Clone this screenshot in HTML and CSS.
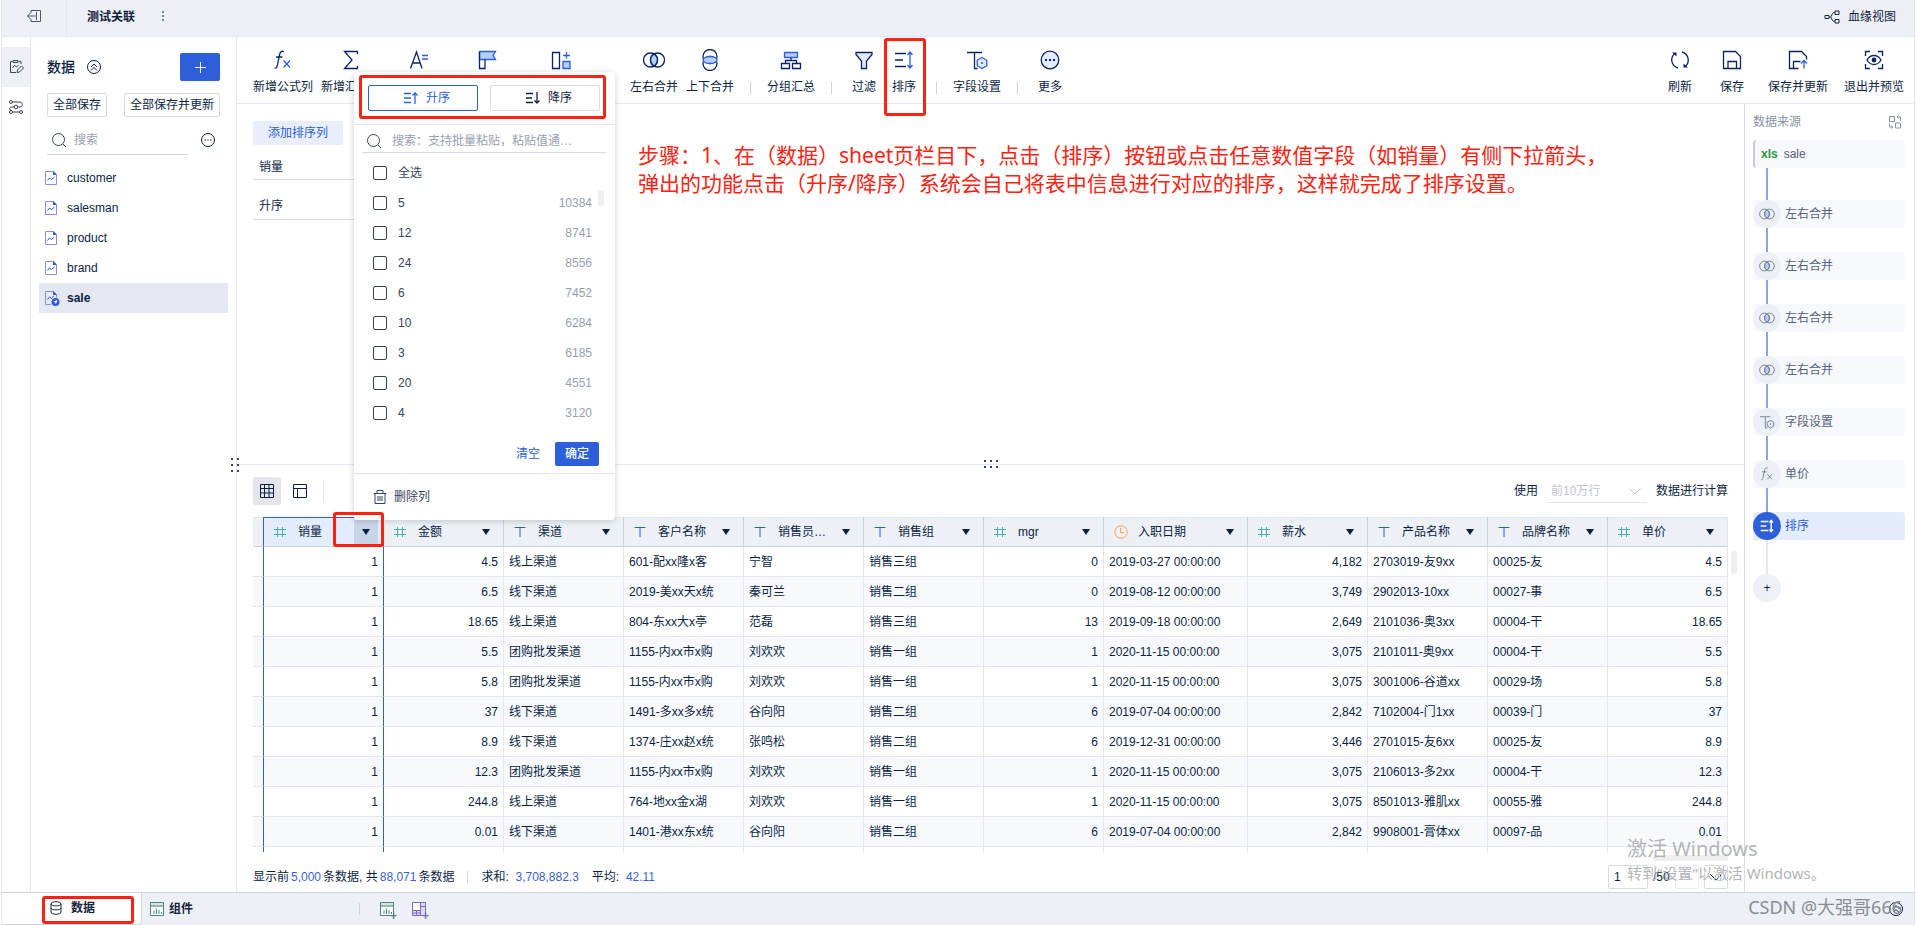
FILE: index.html
```html
<!DOCTYPE html>
<html lang="zh-CN">
<head>
<meta charset="utf-8">
<title>测试关联</title>
<link rel="stylesheet" href="styles.css">
</head>
<body>
<svg class="sprite" aria-hidden="true">
  <symbol id="exit" viewBox="0 0 16 16"><path d="M5 5V2.500h9.500v11H5V11M10.500 4v8M1.500 8h8M4.500 5l-3 3 3 3"/></symbol>
  <symbol id="edit" viewBox="0 0 16 16"><path d="M8 13.500H2.500v-11h2M11 2.500h2V5M5 1.500h5v2H5zM4.500 9l2-2.500 2 1.500 2-2M9 13.500l.5-2.500 4-4 2 2-4 4z"/></symbol>
  <symbol id="flow" viewBox="0 0 16 16"><circle cx="3" cy="3" r="1.500"/><circle cx="8" cy="8" r="1.800"/><circle cx="13" cy="13" r="1.500"/><circle cx="3" cy="13" r="1.500"/><path d="M4.500 3H12c3 0 3 5 0 5h-2M6 8H4C1 8 1 11 3 11.500M4.500 13h7"/></symbol>
  <symbol id="up2" viewBox="0 0 16 16"><circle cx="8" cy="8" r="6.500"/><path d="M5 8l3-3 3 3M5 11.500l3-3 3 3"/></symbol>
  <symbol id="up1" viewBox="0 0 16 16"><circle cx="8" cy="8" r="6.500"/><path d="M4.500 8L8 4.500 11.500 8M5.500 11L8 8.500l2.500 2.500"/></symbol>
  <symbol id="search" viewBox="0 0 16 16"><circle cx="7.500" cy="7.500" r="6"/><path d="M12 12l3 3"/></symbol>
  <symbol id="dots" viewBox="0 0 16 16"><circle cx="8" cy="8" r="6.500"/><path d="M4.500 8h1.400M7.300 8h1.400M10.100 8h1.400"/></symbol>
  <symbol id="file" viewBox="0 0 14 16"><path stroke="#8d8be0" d="M1.500 1.500h8l3 3v10h-11z"/><path fill="#2d5fdb" stroke="none" d="M9 1l4 4H9z"/><path stroke="#2d5fdb" d="M3.500 10.500l2-2.500 2 1.500L10.500 7"/></symbol>
  <symbol id="filesel" viewBox="0 0 16 16"><path stroke="#8d8be0" d="M7 14.500H1.500v-13h8l3 3v3"/><path fill="#2d5fdb" stroke="none" d="M9 1l4 4H9z"/><path stroke="#2d5fdb" d="M3.500 9.500l2-2.500 2 1.500L9.500 6"/><circle cx="11.500" cy="12" r="4" fill="#2d5fdb" stroke="none"/><path d="M9.500 11.500l4-1.500-1.500 4-1-1.500z" fill="#fff" stroke="none"/></symbol>
  <symbol id="fx" viewBox="0 0 20 20"><path d="M11 1.500C8 .5 7 2.500 6.500 5L4.500 14.500C4 17.500 3 18.500 1.500 18M3 7h6.500"/><path class="b" d="M10.500 10.500l6.500 7M17 10.500l-6.500 7"/></symbol>
  <symbol id="sum" viewBox="0 0 20 20"><path d="M16.500 4V1.500h-13L11 10l-7.500 8.500h13V16"/></symbol>
  <symbol id="aeq" viewBox="0 0 20 20"><path d="M1.500 18.500L7.500 2 13 18.500M3.500 13h7.500"/><path class="b" d="M13 5.500h6M13 9h6"/></symbol>
  <symbol id="flag" viewBox="0 0 20 20"><path class="f b" d="M2.500 1.500h16l-2.500 4 2.500 4h-16z"/><path d="M2.500 2v16.500H8v-9"/></symbol>
  <symbol id="addcol" viewBox="0 0 20 20"><path d="M1.500 2.500h7v16h-7z"/><path class="f b" d="M12 11.500h7v7h-7z"/><path class="b" d="M15.500 2v6.500M12 5.500h7"/></symbol>
  <symbol id="join" viewBox="0 0 22 20"><path class="f b" d="M11 3.900a7 7 0 0 1 0 12.200 7 7 0 0 1 0-12.200z"/><circle cx="7.500" cy="10" r="7"/><circle cx="14.500" cy="10" r="7"/></symbol>
  <symbol id="union" viewBox="0 0 20 22"><circle cx="10" cy="7.500" r="7"/><circle cx="10" cy="14.500" r="7"/><ellipse class="f b" cx="10" cy="11" rx="7" ry="3.500"/></symbol>
  <symbol id="group" viewBox="0 0 22 20"><path class="f b" d="M4.500 2.500h13v5h-13z"/><path d="M11 8v2.500M5.500 13.500v-3h11v3M1.500 13.500h8v5h-8zM12.500 13.500h8v5h-8z"/></symbol>
  <symbol id="filter" viewBox="0 0 20 20"><path class="lf" d="M2 2.500h16v2L12.500 11v7.500h-5V11L2 4.500z"/></symbol>
  <symbol id="sort" viewBox="0 0 20 20"><path d="M1 3.500h11M1 10h8M1 16.500h11"/><path class="b" d="M16 2v16M13.500 5L16 2l2.500 3M13.500 15l2.500 3 2.500-3"/></symbol>
  <symbol id="field" viewBox="0 0 22 20"><path d="M1 2.500h15M8.500 2.500v16h3"/><path class="lf b" d="M16 7.500l4.800 2.800v5.400L16 18.500l-4.800-2.800v-5.400z"/><path class="b" d="M15.200 13h1.600" stroke-width="2"/></symbol>
  <symbol id="more" viewBox="0 0 20 20"><circle class="lf" cx="10" cy="10" r="8.800"/><path d="M5 10h2M9 10h2M13 10h2" stroke-width="2"/></symbol>
  <symbol id="refresh" viewBox="0 0 20 20"><path d="M8 18A8.300 8.300 0 0 1 4.500 3.800M12 2a8.300 8.300 0 0 1 3.500 14.200"/><path fill="currentColor" d="M2 2.500h4.500v4zM18 17.500h-4.500v-4z" stroke="none"/></symbol>
  <symbol id="save" viewBox="0 0 20 20"><path d="M1.500 1.500h12l5 5v12h-17zM6 18v-6.500h8.500V18"/></symbol>
  <symbol id="saveup" viewBox="0 0 20 20"><path d="M10.500 18.500h-9v-17h12l5 5v3M5.500 18v-6.500h7"/><path class="b" d="M16 18.500v-8M13 13.500l3-3 3 3"/></symbol>
  <symbol id="preview" viewBox="0 0 20 20"><path d="M1.500 6V1.500H6M14 1.500h4.500V6M18.500 14v4.500H14M6 18.500H1.500V14"/><path d="M3 10c3.500-6 10.500-6 14 0-3.500 6-10.500 6-14 0z"/><circle cx="10" cy="10" r="1.800" fill="currentColor"/></symbol>
  <symbol id="lineage" viewBox="0 0 16 16"><path d="M1 6.500h4v3H1zM11 2h4v3.500h-4zM11 10.500h4V14h-4zM5 8h1.500C8 8 7.500 3.700 9.500 3.700H11M6.500 8c1.500 0 1 4.200 3 4.200H11"/></symbol>
  <symbol id="asc" viewBox="0 0 14 12"><path d="M0 1.500h7M0 6h7M0 10.500h7"/><path d="M11 12V1M8.500 3.500L11 1l2.500 2.500"/></symbol>
  <symbol id="desc" viewBox="0 0 14 12"><path d="M0 1.500h7M0 6h6M0 10.500h7"/><path d="M11 0v11M8.500 8.500L11 11l2.500-2.500"/></symbol>
  <symbol id="trash" viewBox="0 0 14 14"><path d="M.5 3.500h13M4 3V.5h6V3M2 3.500v10h10v-10M5 6v5M7 6v5M9 6v5"/></symbol>
  <symbol id="grid" viewBox="0 0 16 16"><path d="M1.500 1.500h13v13h-13zM1.500 5.500h13M1.500 10h13M5.500 1.500v13M10 1.500v13"/></symbol>
  <symbol id="layout" viewBox="0 0 16 16"><path d="M1.500 1.500h13v13h-13zM1.500 5.500h13M5.500 5.500v9"/></symbol>
  <symbol id="num" viewBox="0 0 12 12"><path d="M3.500 1v10M8.500 1v10M0 3.500h12M0 8.500h12"/></symbol>
  <symbol id="txt" viewBox="0 0 12 12"><path d="M.5 1.500h11M6 1.500V11"/></symbol>
  <symbol id="time" viewBox="0 0 14 14"><circle cx="7" cy="7" r="6.200"/><path d="M6.500 3v4.500H10"/></symbol>
  <symbol id="chev" viewBox="0 0 12 12"><path d="M.5 3.500L6 9l5.500-5.500"/></symbol>
  <symbol id="swap" viewBox="0 0 14 14"><path d="M1.500 1.500h5v5h-5zM7.500 8h5v5h-5zM9 2h3.500v4M10.500 .5L9 2l1.500 1.500M5 12H1.500V8.500M3.500 10.500L5 12l-1.500 1.500"/></symbol>
  <symbol id="db" viewBox="0 0 12 14"><path d="M1 3c0-3 10-3 10 0v8c0 3-10 3-10 0zM1 3c0 2.500 10 2.500 10 0M1 7c0 2.500 10 2.500 10 0"/></symbol>
  <symbol id="chart" viewBox="0 0 14 14"><path fill="#d3e4e2" d="M.5.5h13v13H.5z"/><path fill="#fff" stroke="none" d="M1 4.500h12V13H1z"/><path d="M.5 4h13M4 12V8.500M6.500 12V6.500M9 12V8M11.500 12v-2"/></symbol>
  <symbol id="dash" viewBox="0 0 14 14"><path fill="#ded7f5" d="M.5.5h13v13H.5z"/><path fill="#fff" d="M.5.5h8v8h-8z"/><path d="M8.500 4.500h5M4.500 8.500v5M8.500 8.500v5M.5 11h8"/></symbol>
</svg>

<div class="app">
  <header class="topbar">
    <button class="back" aria-label="返回"><svg class="i16"><use href="#exit"/></svg></button>
    <h1>测试关联</h1>
    <button class="kebab" aria-label="菜单"><i></i><i></i><i></i></button>
    <button class="lineage"><svg class="i16"><use href="#lineage"/></svg>血缘视图</button>
  </header>

  <div class="body">
    <nav class="rail">
      <button class="on" aria-label="编辑"><svg class="i16"><use href="#edit"/></svg></button>
      <button aria-label="流程"><svg class="i16"><use href="#flow"/></svg></button>
    </nav>

    <aside class="side">
      <div class="side-head"><h2>数据</h2><svg class="i16"><use href="#up2"/></svg><button class="add" aria-label="添加"></button></div>
      <div class="side-btns"><button class="outline">全部保存</button><button class="outline">全部保存并更新</button></div>
      <div class="side-search">
        <label class="search"><svg class="i16"><use href="#search"/></svg><input type="text" placeholder="搜索" aria-label="搜索"></label>
        <button aria-label="更多选项"><svg class="i16"><use href="#dots"/></svg></button>
      </div>
      <ul class="files">
        <li><svg><use href="#file"/></svg>customer</li>
        <li><svg><use href="#file"/></svg>salesman</li>
        <li><svg><use href="#file"/></svg>product</li>
        <li><svg><use href="#file"/></svg>brand</li>
        <li class="on"><svg class="sel"><use href="#filesel"/></svg>sale</li>
      </ul>
      <span class="grip grip-v"></span>
    </aside>

    <main class="work">
      <div class="tools">
        <button class="tool w5"><svg><use href="#fx"/></svg><span>新增公式列</span></button>
        <button class="tool w5"><svg><use href="#sum"/></svg><span>新增汇总列</span></button>
        <button class="tool w5" aria-label="文本"><svg><use href="#aeq"/></svg><span></span></button>
        <button class="tool w5" aria-label="标记"><svg><use href="#flag"/></svg><span></span></button>
        <button class="tool w6" aria-label="添加列"><svg><use href="#addcol"/></svg><span></span></button>
        <i class="sep"></i>
        <button class="tool"><svg class="wide"><use href="#join"/></svg><span>左右合并</span></button>
        <button class="tool"><svg class="tall"><use href="#union"/></svg><span>上下合并</span></button>
        <i class="sep"></i>
        <button class="tool"><svg class="wide"><use href="#group"/></svg><span>分组汇总</span></button>
        <i class="sep"></i>
        <button class="tool"><svg><use href="#filter"/></svg><span>过滤</span></button>
        <button class="tool marked"><svg><use href="#sort"/></svg><span>排序</span></button>
        <i class="sep"></i>
        <button class="tool"><svg class="wide"><use href="#field"/></svg><span>字段设置</span></button>
        <i class="sep"></i>
        <button class="tool"><svg><use href="#more"/></svg><span>更多</span></button>
        <div class="tools-right">
          <button class="tool"><svg><use href="#refresh"/></svg><span>刷新</span></button>
          <button class="tool"><svg><use href="#save"/></svg><span>保存</span></button>
          <button class="tool"><svg><use href="#saveup"/></svg><span>保存并更新</span></button>
          <button class="tool"><svg><use href="#preview"/></svg><span>退出并预览</span></button>
        </div>
      </div>

      <div class="panes">
        <div class="center">
          <section class="config">
            <button class="soft">添加排序列</button>
            <div class="line">销量</div>
            <div class="line">升序</div>
            <p class="note">步骤：1、在（数据）sheet页栏目下，点击（排序）按钮或点击任意数值字段（如销量）有侧下拉箭头，<br>弹出的功能点击（升序/降序）系统会自己将表中信息进行对应的排序，这样就完成了排序设置。</p>
          </section>
          <section class="data">
            <span class="grip grip-h"></span>
            <div class="view-bar">
              <button class="view on" aria-label="表格"><svg class="i16"><use href="#grid"/></svg></button>
              <button class="view" aria-label="布局"><svg class="i16"><use href="#layout"/></svg></button>
              <i></i>
              <div class="limit"><label for="limit">使用</label><span class="pick"><select id="limit" disabled><option>前10万行</option></select><svg><use href="#chev"/></svg></span><span>数据进行计算</span></div>
            </div>
            <div class="grid-wrap">
              <table>
                <colgroup><col class="c-stub"><col><col><col><col><col><col><col><col class="c-date"><col><col><col><col></colgroup>
                <thead><tr>
                  <th></th>
                  <th class="cur"><div><svg class="g"><use href="#num"/></svg><span>销量</span><button aria-label="销量菜单"></button></div></th>
                  <th><div><svg class="g"><use href="#num"/></svg><span>金额</span><button aria-label="金额菜单"></button></div></th>
                  <th><div><svg><use href="#txt"/></svg><span>渠道</span><button aria-label="渠道菜单"></button></div></th>
                  <th><div><svg><use href="#txt"/></svg><span>客户名称</span><button aria-label="客户名称菜单"></button></div></th>
                  <th><div><svg><use href="#txt"/></svg><span>销售员…</span><button aria-label="销售员菜单"></button></div></th>
                  <th><div><svg><use href="#txt"/></svg><span>销售组</span><button aria-label="销售组菜单"></button></div></th>
                  <th><div><svg class="g"><use href="#num"/></svg><span>mgr</span><button aria-label="mgr菜单"></button></div></th>
                  <th><div><svg class="o"><use href="#time"/></svg><span>入职日期</span><button aria-label="入职日期菜单"></button></div></th>
                  <th><div><svg class="g"><use href="#num"/></svg><span>薪水</span><button aria-label="薪水菜单"></button></div></th>
                  <th><div><svg><use href="#txt"/></svg><span>产品名称</span><button aria-label="产品名称菜单"></button></div></th>
                  <th><div><svg><use href="#txt"/></svg><span>品牌名称</span><button aria-label="品牌名称菜单"></button></div></th>
                  <th><div><svg class="g"><use href="#num"/></svg><span>单价</span><button aria-label="单价菜单"></button></div></th>
                </tr></thead>
                <tbody>
                  <tr><td></td><td class="n">1</td><td class="n">4.5</td><td>线上渠道</td><td>601-配xx隆x客</td><td>宁智</td><td>销售三组</td><td class="n">0</td><td>2019-03-27 00:00:00</td><td class="n">4,182</td><td>2703019-友9xx</td><td>00025-友</td><td class="n">4.5</td></tr>
                  <tr><td></td><td class="n">1</td><td class="n">6.5</td><td>线下渠道</td><td>2019-美xx天x统</td><td>秦可兰</td><td>销售二组</td><td class="n">0</td><td>2019-08-12 00:00:00</td><td class="n">3,749</td><td>2902013-10xx</td><td>00027-事</td><td class="n">6.5</td></tr>
                  <tr><td></td><td class="n">1</td><td class="n">18.65</td><td>线上渠道</td><td>804-东xx大x亭</td><td>范磊</td><td>销售三组</td><td class="n">13</td><td>2019-09-18 00:00:00</td><td class="n">2,649</td><td>2101036-奥3xx</td><td>00004-干</td><td class="n">18.65</td></tr>
                  <tr><td></td><td class="n">1</td><td class="n">5.5</td><td>团购批发渠道</td><td>1155-内xx市x购</td><td>刘欢欢</td><td>销售一组</td><td class="n">1</td><td>2020-11-15 00:00:00</td><td class="n">3,075</td><td>2101011-奥9xx</td><td>00004-干</td><td class="n">5.5</td></tr>
                  <tr><td></td><td class="n">1</td><td class="n">5.8</td><td>团购批发渠道</td><td>1155-内xx市x购</td><td>刘欢欢</td><td>销售一组</td><td class="n">1</td><td>2020-11-15 00:00:00</td><td class="n">3,075</td><td>3001006-谷道xx</td><td>00029-场</td><td class="n">5.8</td></tr>
                  <tr><td></td><td class="n">1</td><td class="n">37</td><td>线下渠道</td><td>1491-多xx多x统</td><td>谷向阳</td><td>销售二组</td><td class="n">6</td><td>2019-07-04 00:00:00</td><td class="n">2,842</td><td>7102004-门1xx</td><td>00039-门</td><td class="n">37</td></tr>
                  <tr><td></td><td class="n">1</td><td class="n">8.9</td><td>线下渠道</td><td>1374-庄xx赵x统</td><td>张鸣松</td><td>销售二组</td><td class="n">6</td><td>2019-12-31 00:00:00</td><td class="n">3,446</td><td>2701015-友6xx</td><td>00025-友</td><td class="n">8.9</td></tr>
                  <tr><td></td><td class="n">1</td><td class="n">12.3</td><td>团购批发渠道</td><td>1155-内xx市x购</td><td>刘欢欢</td><td>销售一组</td><td class="n">1</td><td>2020-11-15 00:00:00</td><td class="n">3,075</td><td>2106013-多2xx</td><td>00004-干</td><td class="n">12.3</td></tr>
                  <tr><td></td><td class="n">1</td><td class="n">244.8</td><td>线上渠道</td><td>764-地xx金x湖</td><td>刘欢欢</td><td>销售一组</td><td class="n">1</td><td>2020-11-15 00:00:00</td><td class="n">3,075</td><td>8501013-雅肌xx</td><td>00055-雅</td><td class="n">244.8</td></tr>
                  <tr><td></td><td class="n">1</td><td class="n">0.01</td><td>线下渠道</td><td>1401-港xx东x统</td><td>谷向阳</td><td>销售二组</td><td class="n">6</td><td>2019-07-04 00:00:00</td><td class="n">2,842</td><td>9908001-膏体xx</td><td>00097-品</td><td class="n">0.01</td></tr>
                  <tr class="cut"><td></td><td></td><td></td><td></td><td></td><td></td><td></td><td></td><td></td><td></td><td></td><td></td><td></td></tr>
                </tbody>
              </table>
              <i class="thumb-v"></i><i class="thumb-h"></i>
            </div>
            <div class="status">
              <p>显示前<b class="count">5,000</b>条数据, 共<b class="count">88,071</b>条数据</p><i></i>
              <p>求和:&nbsp; <b>3,708,882.3</b></p><p>平均:&nbsp; <b>42.11</b></p>
              <div class="pager"><input type="text" value="1" aria-label="页码"><span>/50</span><button class="off" aria-label="上一页"><svg><use href="#chev"/></svg></button><button aria-label="下一页"><svg><use href="#chev"/></svg></button></div>
            </div>
          </section>
        </div>

        <aside class="steps">
          <div class="steps-head"><h3>数据来源</h3><svg><use href="#swap"/></svg></div>
          <ol>
            <li class="src"><b>xls</b>sale</li>
            <li><span><svg><use href="#join"/></svg></span>左右合并</li>
            <li><span><svg><use href="#join"/></svg></span>左右合并</li>
            <li><span><svg><use href="#join"/></svg></span>左右合并</li>
            <li><span><svg><use href="#join"/></svg></span>左右合并</li>
            <li><span><svg><use href="#field"/></svg></span>字段设置</li>
            <li><span><svg><use href="#fx"/></svg></span>单价</li>
            <li class="on"><span><svg><use href="#sort"/></svg></span>排序</li>
          </ol>
          <button class="plus" aria-label="添加步骤">+</button>
        </aside>
      </div>
    </main>
  </div>

  <footer class="sheets">
    <button class="sheet on"><svg class="db"><use href="#db"/></svg>数据</button>
    <button class="sheet"><svg class="teal"><use href="#chart"/></svg>组件</button>
    <i></i>
    <button class="new teal" aria-label="新建组件"><svg><use href="#chart"/></svg></button>
    <button class="new violet" aria-label="新建仪表板"><svg><use href="#dash"/></svg></button>
    <button class="fold" aria-label="收起"><svg class="i16"><use href="#up1"/></svg></button>
  </footer>

  <div class="menu">
    <div class="order"><button class="on"><svg><use href="#asc"/></svg>升序</button><button><svg><use href="#desc"/></svg>降序</button></div>
    <div class="menu-list">
      <label class="search"><svg class="i16"><use href="#search"/></svg><input type="text" placeholder="搜索：支持批量粘贴，粘贴值通…" aria-label="搜索值"></label>
      <label class="opt"><input type="checkbox">全选</label>
      <div class="opts">
        <label class="opt"><input type="checkbox">5<em>10384</em></label>
        <label class="opt"><input type="checkbox">12<em>8741</em></label>
        <label class="opt"><input type="checkbox">24<em>8556</em></label>
        <label class="opt"><input type="checkbox">6<em>7452</em></label>
        <label class="opt"><input type="checkbox">10<em>6284</em></label>
        <label class="opt"><input type="checkbox">3<em>6185</em></label>
        <label class="opt"><input type="checkbox">20<em>4551</em></label>
        <label class="opt"><input type="checkbox">4<em>3120</em></label>
      </div>
      <div class="acts"><button>清空</button><button class="ok">确定</button></div>
    </div>
    <button class="del"><svg><use href="#trash"/></svg>删除列</button>
  </div>
  <i class="mark-arrow"></i>

  <div class="activate"><p>激活 Windows</p><p>转到“设置”以激活 Windows。</p></div>
  <p class="credit">CSDN @大强哥666</p>
</div>
</body>
</html>
```
FILE: styles.css
```css
:root {
  --ink: #0b1f45;
  --blue: #2d5fdb;
  --line: #e4e7ef;
  --bar: #edf1f7;
  --red: #ff2213;
  --gray: #98a0b0;
}
* { box-sizing: border-box; margin: 0; padding: 0; }
body {
  font: 12px/18px "Liberation Sans", "Noto Sans CJK SC", sans-serif;
  color: var(--ink);
  background: #fff;
}
button, input, select { font: inherit; color: inherit; background: none; border: 0; outline: 0; }
button { display: flex; align-items: center; justify-content: center; cursor: pointer; white-space: nowrap; }
input::placeholder { color: var(--gray); opacity: 1; }
h1, h2, h3 { font-size: 12px; }
svg { fill: none; stroke: currentColor; flex: none; }
i { flex: none; }
.sprite { position: absolute; width: 0; height: 0; }
.i16 { width: 16px; height: 16px; }
.f { fill: #b5cffb; }
.lf { fill: #e1ebfd; }
.b { stroke: var(--blue); }

.app {
  position: relative;
  display: flex;
  flex-direction: column;
  height: 100vh;
  margin: 0 1px;
  border-left: 1px solid var(--line);
  border-right: 1px solid var(--line);
  overflow: hidden;
}

/* top bar */
.topbar { display: flex; align-items: center; height: 37px; padding-right: 18px; background: var(--bar); border-bottom: 1px solid var(--line); color: #16233c; }
.topbar h1 { margin: 0 24px 2px 20px; }
.back { width: 65px; height: 36px; padding-bottom: 4px; border-right: 1px solid var(--line); color: #4a5468; }
.kebab { flex-direction: column; gap: 2px; width: 8px; padding-bottom: 4px; }
.kebab i { width: 2px; height: 2px; background: #7a8394; }
.lineage { gap: 8px; margin: 0 0 2px auto; }

.body { display: flex; flex: 1; min-height: 0; }

/* icon rail */
.rail { width: 29px; padding-top: 10px; border-right: 1px solid var(--line); }
.rail button { width: 28px; height: 40px; color: #39445a; }
.rail .on { background: var(--bar); }

/* file list */
.side { position: relative; width: 206px; border-right: 1px solid var(--line); }
.side-head { display: flex; align-items: center; gap: 11px; padding: 16px 16px 0; }
.side-head h2 { font-size: 14px; line-height: 28px; font-weight: 500; }
.add { width: 40px; height: 28px; margin-left: auto; border-radius: 2px; background: linear-gradient(#fff, #fff) center / 11px 1px no-repeat, linear-gradient(#fff, #fff) center / 1px 11px no-repeat, var(--blue); }
.side-btns { display: flex; justify-content: space-between; padding: 12px 16px 0; }
.outline { height: 24px; padding: 0 5px; border: 1px solid #d8dbe2; border-radius: 2px; }
.side-search { display: flex; align-items: center; justify-content: space-between; padding: 8px 20px 0 16px; }
.search { display: flex; align-items: center; gap: 7px; height: 30px; padding-left: 4px; border-bottom: 1px solid #d4d8e0; color: #39445a; }
.search input { flex: 1; min-width: 0; }
.side-search .search { width: 141px; }
.files { list-style: none; padding: 8px 8px 0; }
.files li { display: flex; align-items: center; gap: 8px; height: 30px; padding-left: 5px; }
.files svg { width: 14px; height: 16px; margin-right: 1px; }
.files .sel { width: 16px; margin-right: -1px; }
.files .on { background: #e5e8f0; font-weight: bold; }

.grip { position: absolute; z-index: 1; background: radial-gradient(circle, #39445a 1px, transparent 1px) 0 0 / 6px 6px; }
.grip-v { right: -5px; bottom: 418px; width: 12px; height: 18px; }
.grip-h { left: 50%; top: -7px; width: 18px; height: 12px; margin-left: -9px; }

/* toolbar */
.work { flex: 1; min-width: 0; display: flex; flex-direction: column; }
.tools { display: flex; height: 67px; padding: 0 6px 0 12px; border-bottom: 1px solid var(--line); }
.tool { position: relative; flex-direction: column; justify-content: flex-start; gap: 5px; min-width: 40px; padding: 12px 4px 0; }
.tool svg { width: 20px; height: 22px; color: #0c2463; stroke-width: 1.3; }
.tool .wide { width: 22px; }
.tool span { min-height: 22px; line-height: 22px; }
.w5 { width: 68px; }
.w6 { width: 80px; }
.sep { width: 1px; height: 12px; margin: 45px 12px 0; background: #cfd3db; }
.marked::after { content: ""; position: absolute; inset: 1px -2px -13px 0; border: 3px solid var(--red); border-radius: 3px; }
.tools-right { display: flex; gap: 12px; margin-left: auto; }
.tools-right .tool:last-child { margin-left: -4px; }

/* work area */
.panes { display: flex; flex: 1; min-height: 0; }
.center { flex: 1; min-width: 0; display: flex; flex-direction: column; }
.config { position: relative; flex: 1; padding: 17px 16px 0; }
.soft { width: 90px; height: 24px; border-radius: 2px; background: #e8eefc; color: var(--blue); }
.line { width: 200px; height: 35px; padding: 13px 6px 0; border-bottom: 1px solid #d4d8e0; }
.line + .line { height: 40px; padding-top: 17px; }
.note { position: absolute; left: 401px; top: 37px; font: 21px/28px "Noto Sans", "Noto Sans CJK SC", sans-serif; color: var(--red); white-space: nowrap; }

.data { position: relative; padding: 12px 16px 0; border-top: 1px solid var(--line); }
.view-bar { display: flex; align-items: center; gap: 5px; }
.view { width: 28px; height: 28px; border-radius: 2px; }
.view.on { background: #e4e6ea; }
.view-bar > i { width: 1px; height: 20px; margin-left: 4px; background: var(--line); }
.limit { display: flex; align-items: center; gap: 9px; margin-left: auto; }
.pick { display: flex; align-items: center; width: 100px; height: 24px; padding: 0 6px 0 4px; border-bottom: 1px solid var(--line); color: #bfc4ce; }
.pick select { flex: 1; appearance: none; opacity: 1; }
.pick svg { width: 12px; height: 12px; }

.grid-wrap { position: relative; margin-top: 12px; }
table { width: 100%; table-layout: fixed; border-collapse: separate; border-spacing: 0; }
.c-stub { width: 11px; }
.c-date { width: 144px; }
th { height: 30px; background: var(--bar); border: solid #cdd3de; border-width: 0 1px 1px 0; box-shadow: inset 0 1px var(--line); font-weight: normal; text-align: left; }
th:last-child { border-right-color: var(--line); }
th div { display: flex; align-items: center; height: 29px; padding: 0 5px 0 10px; }
th svg { width: 12px; height: 12px; margin-right: 12px; color: var(--blue); }
th .g { color: #45b3a2; }
th .o { width: 14px; height: 14px; margin-right: 10px; color: #f2a13e; }
th span { flex: 1; white-space: nowrap; }
th button { width: 24px; height: 24px; }
th button::after { content: ""; border: solid transparent; border-width: 6px 4px 0; border-top-color: #0b1f45; }
th.cur { background: #e3edfe; box-shadow: inset 0 1px var(--blue); }
.cur button { background: #c8d4e8; }
td { height: 30px; padding: 0 5px; border: solid var(--line); border-width: 0 1px 1px 0; white-space: nowrap; line-height: 16px; }
th:first-child, th.cur, td:first-child, td:nth-child(2) { border-right-color: var(--blue); }
td:first-child { padding: 0; }
tbody tr:nth-child(even) { background: #f7f9fd; }
.n { text-align: right; }
.cut td { height: 5px; line-height: 0; padding: 0; border-bottom: 0; }
.cut td:last-child { border-right: 0; }
.thumb-v { position: absolute; right: -9px; top: 34px; width: 6px; height: 23px; border-radius: 3px; background: #eeeff1; }
.thumb-h { position: absolute; right: 0; bottom: -9px; width: 75px; height: 6px; background: #eeeff1; }

.status { display: flex; align-items: center; gap: 13px; height: 40px; padding-top: 9px; }
.status b { font-weight: normal; color: #3c5fd6; }
.count { margin: 0 2px; }
.status > i { width: 1px; height: 12px; background: #d4d8e0; }
.pager { display: flex; align-items: center; gap: 5px; margin-left: auto; }
.pager input { width: 40px; height: 24px; padding: 0 5px; }
.pager span { width: 17px; }
.pager input, .pager button { border: 1px solid #d8dbe2; border-radius: 2px; }
.pager button { width: 24px; height: 24px; }
.pager svg { width: 12px; height: 12px; }
.pager .off { color: #c8ccd4; border-color: #eceef2; }
.off svg { transform: rotate(180deg); }

/* step list */
.steps { width: 170px; padding: 9px 9px 0 8px; border-left: 1px solid #d9dce5; color: #55627c; }
.steps-head { display: flex; align-items: center; justify-content: space-between; padding-right: 3px; color: #8a93a6; }
.steps-head h3 { font-weight: normal; }
.steps-head svg { width: 14px; height: 14px; }
.steps ol { list-style: none; padding-top: 9px; }
.steps li { position: relative; display: flex; align-items: center; gap: 4px; height: 28px; margin-top: 24px; background: #f7f9fd; border-radius: 3px; }
.steps li::before { content: ""; position: absolute; left: 13px; bottom: 28px; width: 2px; height: 24px; background: #8ba7e9; }
.steps li:nth-child(2)::before { height: 32px; }
.steps li:nth-child(2) { margin-top: 32px; }
.steps .src { margin-top: 0; padding-left: 6px; gap: 6px; border-left: 2px solid #c9cdd7; }
.steps .src::before { display: none; }
.src b { color: #2f9440; }
.steps li span { display: flex; align-items: center; justify-content: center; width: 28px; height: 28px; border-radius: 14px; background: var(--bar); }
.steps li svg { width: 16px; height: 14px; color: #6f798d; stroke-width: 1.3; }
.steps li use { --blue: currentColor; }
.steps .on { background: #e3edfe; color: var(--blue); }
.steps .on span { background: var(--blue); }
.steps .on svg { color: #fff; stroke-width: 2; }
.plus { position: relative; width: 28px; height: 28px; margin-top: 34px; border-radius: 14px; background: var(--bar); color: var(--ink); }
.plus::before { content: ""; position: absolute; left: 13px; bottom: 28px; width: 2px; height: 34px; background: #e6e8ee; }

/* sheet tabs */
.sheets { display: flex; align-items: center; height: 33px; border-top: 1px solid #cfd3df; background: var(--bar); }
.sheet { gap: 5px; height: 32px; padding: 0 0 1px 8px; font-weight: bold; color: #16233c; }
.sheet svg { width: 14px; height: 14px; }
.sheet.on { position: relative; justify-content: flex-start; gap: 9px; width: 140px; padding-left: 48px; background: #fff; border-right: 1px solid #cfd3df; border-bottom: 1px solid #cfd3df; border-radius: 0 0 4px 0; }
.sheet.on::after { content: ""; position: absolute; inset: 3px 7px 0 40px; border: 3px solid var(--red); border-radius: 3px; }
.sheet .db { width: 12px; }
.sheets > i { width: 1px; height: 12px; margin: 0 20px 0 166px; background: #cfd3db; }
.new { position: relative; margin-right: 18px; }
.new svg { width: 14px; height: 14px; }
.new::after { content: "+"; position: absolute; right: -3px; bottom: -6px; font-weight: bold; line-height: 12px; }
.teal { color: #4f8580; }
.violet { color: #7c6bc4; }
.fold { margin: 0 10px 0 auto; }

/* column menu */
.menu { position: absolute; left: 352px; top: 72px; width: 261px; padding-top: 3px; background: #fff; border-radius: 4px; box-shadow: 0 1px 6px rgba(20, 35, 70, .22); color: #39445a; }
.order { display: flex; gap: 12px; margin: 0 9px 5px 5px; padding: 7px 3px 5px 6px; border: 3px solid var(--red); border-radius: 3px; }
.order button { flex: 1; gap: 8px; height: 26px; padding-left: 8px; border: 1px solid #d8dbe2; border-radius: 2px; color: #16233c; }
.order .on { border-color: var(--blue); color: var(--blue); }
.order svg { width: 14px; height: 12px; stroke-width: 1.3; }
.menu-list { padding: 0 9px 7px 8px; border: solid var(--line); border-width: 1px 0; }
.menu-list .search { height: 28px; padding-top: 4px; gap: 10px; }
.opt { display: flex; align-items: center; gap: 11px; height: 30px; padding: 0 14px 0 11px; }
.menu-list .search + .opt { margin-top: 5px; }
.opt input { appearance: none; width: 14px; height: 14px; border: 1px solid #39445a; border-radius: 2px; }
.opt em { margin-left: auto; font-style: normal; color: var(--gray); }
.opts { position: relative; }
.opts::after { content: ""; position: absolute; right: 2px; top: 2px; width: 6px; height: 16px; border-radius: 3px; background: #eeeff1; }
.acts { display: flex; justify-content: flex-end; gap: 15px; padding: 14px 7px 0 0; color: var(--blue); }
.acts .ok { width: 44px; height: 24px; border-radius: 2px; background: var(--blue); color: #fff; font-weight: 500; }
.del { gap: 7px; height: 46px; padding-left: 19px; }
.del svg { width: 14px; height: 14px; }
.mark-arrow { position: absolute; left: 331px; top: 512px; width: 51px; height: 35px; border: 3px solid var(--red); border-radius: 3px; }

/* overlays */
.activate { position: absolute; left: 1625px; top: 835px; font: 15px/20px "Noto Sans", "Noto Sans CJK SC", sans-serif; color: #b4b5b8; white-space: nowrap; }
.activate p:first-child { font-size: 20px; line-height: 28px; }
.credit { position: absolute; right: 12px; bottom: 5px; font: 18px/26px "Noto Sans", "Noto Sans CJK SC", sans-serif; color: #8a8c90; }
```
